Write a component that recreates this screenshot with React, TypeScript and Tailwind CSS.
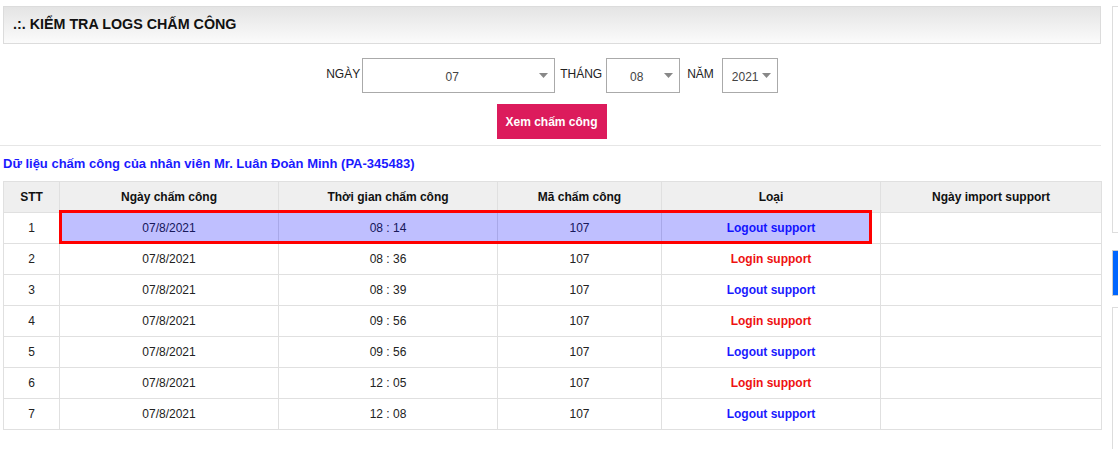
import React from 'react';

type Row = { stt: number; date: string; time: string; code: string; type: 'in' | 'out' };

const rows: Row[] = [
  { stt: 1, date: '07/8/2021', time: '08 : 14', code: '107', type: 'out' },
  { stt: 2, date: '07/8/2021', time: '08 : 36', code: '107', type: 'in' },
  { stt: 3, date: '07/8/2021', time: '08 : 39', code: '107', type: 'out' },
  { stt: 4, date: '07/8/2021', time: '09 : 56', code: '107', type: 'in' },
  { stt: 5, date: '07/8/2021', time: '09 : 56', code: '107', type: 'out' },
  { stt: 6, date: '07/8/2021', time: '12 : 05', code: '107', type: 'in' },
  { stt: 7, date: '07/8/2021', time: '12 : 08', code: '107', type: 'out' },
];

const Caret = () => (
  <svg width="9" height="5" viewBox="0 0 9 5" className="shrink-0">
    <path d="M0 0h9L4.5 5z" fill="#888" />
  </svg>
);

const Select = ({ value, width, align }: { value: string; width: string; align: 'center' | 'left' }) => (
  <div className={`${width} h-[35px] border border-[#aaa] bg-white flex items-center pr-[6px] ${align === 'left' ? 'pl-[9px]' : 'pl-[8px]'}`}>
    <span className={`flex-1 text-[12px] text-[#444] pt-[2px] ${align === 'center' ? 'text-center pr-[6px]' : 'text-left'}`}>{value}</span>
    <Caret />
  </div>
);

const cols = ['w-[56px]', 'w-[219px]', 'w-[219px]', 'w-[164px]', 'w-[219px]', 'w-[221px]'];

export default function App() {
  return (
    <div className="w-[1118px] h-[449px] overflow-hidden bg-white flex pl-[3px] pt-[6px] font-['Liberation_Sans',Arial,sans-serif] text-[#222]">
      <div className="w-[1098px] flex flex-col">
        <div className="h-[38px] border border-[#dcdcdc] bg-gradient-to-b from-[#e4e4e4] to-[#fbfbfb] flex items-center pl-[9px]">
          <h1 className="text-[14.3px] font-bold text-[#111]">.:. KIỂM TRA LOGS CHẤM CÔNG</h1>
        </div>

        <div className="flex justify-center items-center mt-[14px] text-[12px] text-[#222]">
          <span className="mr-[2px] -mt-[3px]">NGÀY</span>
          <Select value="07" width="w-[193px]" align="center" />
          <span className="ml-[5px] mr-[4px] -mt-[3px]">THÁNG</span>
          <Select value="08" width="w-[74px]" align="center" />
          <span className="ml-[7px] mr-[8px] -mt-[3px]">NĂM</span>
          <Select value="2021" width="w-[56px]" align="left" />
        </div>

        <div className="flex justify-center mt-[11px] pr-[1px]">
          <button className="w-[110px] h-[35px] bg-[#dc1b5c] text-white text-[12px] font-bold">Xem chấm công</button>
        </div>

        <div className="-ml-[3px] mt-[6px] border-b border-[#e6e6e6]" />

        <p className="mt-[8px] text-[13px] font-bold text-[#1a1aff]">
          Dữ liệu chấm công của nhân viên Mr. Luân Đoàn Minh (PA-345483)
        </p>

        <div className="relative mt-[7px]">
          <table className="border-collapse table-fixed w-[1098px] text-[12px]">
            <thead>
              <tr className="h-[31px] bg-[#efefef]">
                {['STT', 'Ngày chấm công', 'Thời gian chấm công', 'Mã chấm công', 'Loại', 'Ngày import support'].map((h, i) => (
                  <th key={h} className={`${cols[i]} border border-[#e0e0e0] font-bold text-[#111] text-center`}>{h}</th>
                ))}
              </tr>
            </thead>
            <tbody>
              {rows.map((r) => (
                <tr key={r.stt} className="h-[31px]">
                  <td className="border border-[#e0e0e0] text-center">{r.stt}</td>
                  <td className="border border-[#e0e0e0] text-center">{r.date}</td>
                  <td className="border border-[#e0e0e0] text-center">{r.time}</td>
                  <td className="border border-[#e0e0e0] text-center">{r.code}</td>
                  <td className={`border border-[#e0e0e0] text-center font-bold ${r.type === 'out' ? 'text-[#1a1aff]' : 'text-[#ee1111]'}`}>
                    {r.type === 'out' ? 'Logout support' : 'Login support'}
                  </td>
                  <td className="border border-[#e0e0e0]" />
                </tr>
              ))}
            </tbody>
          </table>
          {/* highlighted row marker */}
          <div className="absolute left-[56px] top-[29px] w-[813px] h-[34px] border-[3px] border-[#ff0000] bg-[#0000ff]/25 pointer-events-none" />
        </div>
      </div>

      <div className="ml-[11px] flex-1 flex flex-col">
        <div className="h-[227px] border border-[#dddddd] border-r-0" />
        <div className="mt-[17px] h-[46px] bg-[#0066ff] border border-[#cccccc] border-r-0" />
        <div className="mt-[11px] flex-1 border border-[#dddddd] border-r-0 border-b-0" />
      </div>
    </div>
  );
}
